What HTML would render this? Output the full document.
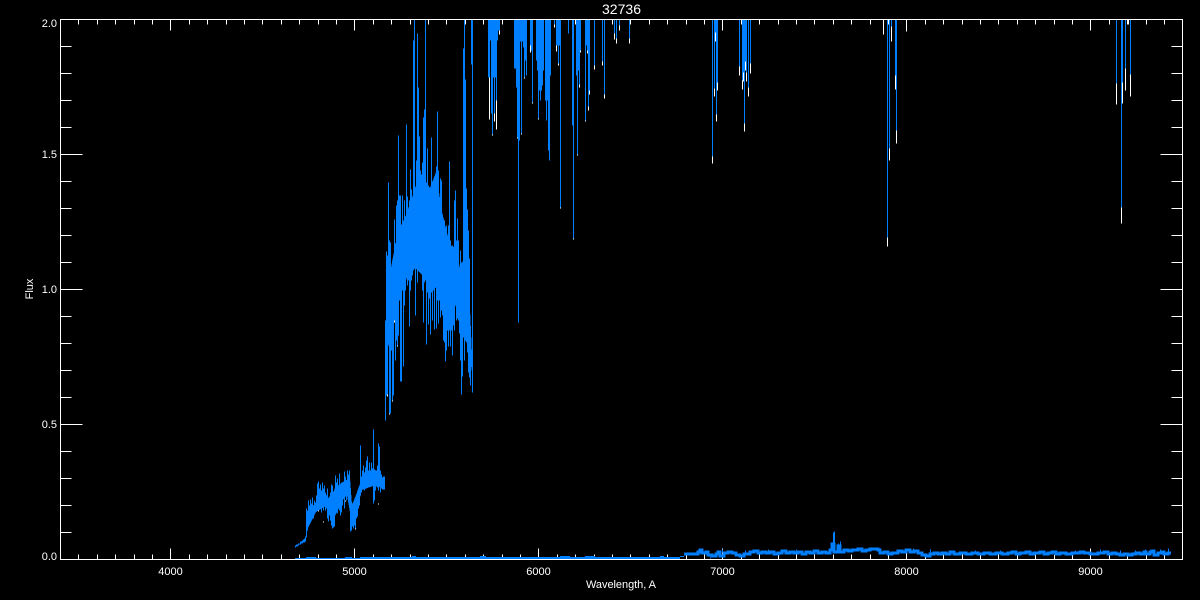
<!DOCTYPE html>
<html><head><meta charset="utf-8"><title>32736</title>
<style>html,body{margin:0;padding:0;background:#000;width:1200px;height:600px;overflow:hidden}svg{display:block}text{font-family:"Liberation Sans",sans-serif;font-size:11px;fill:#fff}</style></head>
<body>
<svg width="1200" height="600" viewBox="0 0 1200 600">
<rect width="1200" height="600" fill="#000"/>
<g shape-rendering="crispEdges" fill="none" stroke-width="1">
<!-- ticks -->
<path stroke="#fff" transform="translate(.5 .5)" d="M78 19V24M97 19V24M115 19V24M134 19V24M152 19V24M170 19V30M189 19V24M207 19V24M226 19V24M244 19V24M262 19V24M281 19V24M299 19V24M318 19V24M336 19V24M354 19V30M373 19V24M391 19V24M410 19V24M428 19V24M446 19V24M465 19V24M483 19V24M502 19V24M520 19V24M538 19V30M557 19V24M575 19V24M594 19V24M612 19V24M630 19V24M649 19V24M667 19V24M686 19V24M704 19V24M722 19V30M741 19V24M759 19V24M778 19V24M796 19V24M814 19V24M833 19V24M851 19V24M870 19V24M888 19V24M906 19V30M925 19V24M943 19V24M962 19V24M980 19V24M998 19V24M1017 19V24M1035 19V24M1054 19V24M1072 19V24M1090 19V30M1109 19V24M1127 19V24M1146 19V24M1164 19V24
M78 559V554M97 559V554M115 559V554M134 559V554M152 559V554M170 559V548M189 559V554M207 559V554M226 559V554M244 559V554M262 559V554M281 559V554M299 559V554M318 559V554M336 559V554M354 559V548M373 559V554M391 559V554M410 559V554M428 559V554M446 559V554M465 559V554M483 559V554M502 559V554M520 559V554M538 559V548M557 559V554M575 559V554M594 559V554M612 559V554M630 559V554M649 559V554M667 559V554M686 559V554M704 559V554M722 559V548M741 559V554M759 559V554M778 559V554M796 559V554M814 559V554M833 559V554M851 559V554M870 559V554M888 559V554M906 559V548M925 559V554M943 559V554M962 559V554M980 559V554M998 559V554M1017 559V554M1035 559V554M1054 559V554M1072 559V554M1090 559V548M1109 559V554M1127 559V554M1146 559V554M1164 559V554
M60 46H71M60 73H71M60 100H71M60 127H71M60 154H82M60 181H71M60 208H71M60 235H71M60 262H71M60 289H82M60 316H71M60 343H71M60 370H71M60 397H71M60 424H82M60 451H71M60 478H71M60 505H71M60 532H71
M1182 46H1171M1182 73H1171M1182 100H1171M1182 127H1171M1182 154H1160M1182 181H1171M1182 208H1171M1182 235H1171M1182 262H1171M1182 289H1160M1182 316H1171M1182 343H1171M1182 370H1171M1182 397H1171M1182 424H1160M1182 451H1171M1182 478H1171M1182 505H1171M1182 532H1171"/>
<!-- white spectrum residuals -->
<path stroke="#fff" transform="translate(.5 .5)" d="M489 77V119M492 113V135M494 113V121M496 100V129M499 30V34M517 100V138M521 120V134M524 60V78M530 45V52M532 60V103M538 100V119M546 100V120M548 120V122M554 19V27M556 45V51M558 45V65M560 45V208M573 125V239M577 75V155M579 70V87M580 45V52M585 100V121M587 45V53M588 100V110M589 85V94M594 60V69M602 55V65M604 90V98M614 32V39M616 37V43M619 22V30M629 35V43M712 156V163M714 82V96M715 32V41M716 112V121M717 82V90M739 66V75M742 80V89M743 72V81M744 123V131M745 61V70M746 72V81M748 87V96M750 63V73M883 19V34M887 237V246M889 148V160M891 26V41M895 75V89M896 130V143M906 19V31M1116 83V104M1122 82V103M1121 207V223M1125 68V90M1127 19V24M1128 19V24M1130 74V96M387 394V396M389 413V414M392 400V401M397 345V346M394 320V322M388 305V306M414 265V267M416 255V256M442 240V249M464 280V288M306 515V516M318 510V511M323 521V522M345 500V501M355 528V529M366 485V487M373 490V491M378 503V504"/>
<!-- solid underlay of the noisy flux body -->
<polygon fill="#0080ff" points="386,300 392,262 398,232 406,215 413,195 420,172 430,188 436,172 442,212 450,245 456,248 460,268 464,258 468,262 472,355 472,372 468,345 462,335 456,305 450,318 444,312 436,288 425,278 415,268 408,275 402,290 396,305 390,340 386,355"/>
<polygon fill="#0080ff" points="306,512 316,503 323,490 330,500 335,488 343,482 350,478 352,505 356,495 362,478 373,468 385,480 385,488 373,486 362,490 356,512 352,524 347,495 343,500 333,520 326,506 316,512 306,532"/>
<!-- blue flux -->
<path stroke="#0080ff" transform="translate(.5 .5)" d="
M295 545V547M296 544V546M297 544V546M298 543V545M299 543V544M300 541V544M301 541V543M302 540V543M303 539V542M304 538V542M305 536V541M306 508V537M307 512V530
M308 500V515M309 505V516M310 499V512M311 503V512M312 497V510M313 505V518M314 500V511M315 502V512M316 495V510
M317 483V500M318 481V510M319 488V502M320 484V505M321 490V512M322 482V505M323 488V510M324 485V498M325 492V510M326 495V508
M327 488V518M328 503V521M329 496V515M330 492V520M331 484V525M332 485V528M333 496V527M334 502V526M335 475V510M336 482V500M337 478V513M338 490V505M339 473V510M340 495V515M341 482V512M342 490V505M343 483V498M344 471V508M345 476V494M346 482V500M347 470V495M348 474V492M349 470V500M350 500V531M351 505V530M352 503V526M353 510V528M354 505V525M355 500V528M356 498V518M357 492V516M358 490V508M359 486V505M360 445V495M361 476V492M362 470V485M363 465V482M364 472V490M365 467V486M366 460V487M367 456V480M368 470V483M369 462V482M370 470V486M371 462V478M372 470V485M373 429V503M374 470V500M375 478V490M376 470V485M377 465V487M378 443V490M379 446V480M380 470V492M381 474V488M382 478V489M383 476V489M384 476V489M385 320V420
M386 251V395M387 255V394M388 182V305M389 240V413M390 242V413M391 268V350M392 270V400M393 275V395M394 219V320M395 243V360M396 205V340M397 200V345M398 135V335M399 195V300M400 195V381M401 240V381M402 195V290M403 230V366M404 200V305M405 240V290M406 124V270M407 196V285M408 215V280M409 200V326M410 169V290M411 189V280M412 205V275M413 40V270M414 19V265M415 187V315M416 160V262M417 33V282M418 87V260M419 136V262M420 170V265M421 175V262M422 162V290M423 117V322M424 109V282M425 19V280M426 184V344M427 148V292M428 190V324M429 195V298M430 197V334M431 137V292M432 181V320M433 207V290M434 210V329M435 200V278M436 166V328M437 111V300M438 170V323M439 205V300M440 178V317M441 180V310M442 215V315M443 225V340M444 220V342M445 228V361M446 225V350M447 235V330M448 225V346M449 161V330M450 240V346M451 265V330M452 245V355M453 270V325M454 200V330M455 190V305M456 240V320M457 218V318M458 240V320M459 270V333M460 250V360M461 262V394M462 268V376M463 48V300M464 19V360M465 79V270M466 188V270M467 209V352M468 230V372M469 258V377M470 350V385M471 19V64M472 19V392
M488 19V77M489 19V77M490 19V40M491 19V113M492 19V134M493 19V77M494 19V113M495 19V77M496 19V100M497 19V40M498 19V30M499 19V30
M514 19V68M515 19V68M516 19V87M517 19V137M518 19V322M519 19V140M520 19V41M521 19V133M522 19V41M523 19V47M524 19V77M525 19V60M526 19V75M530 19V45M531 19V50M532 19V102
M536 19V60M537 19V70M538 19V118M539 19V90M540 19V100M541 19V90M542 19V85M543 19V70M545 19V100M546 19V120M547 19V100M548 19V150M549 19V160M550 19V75
M554 19V24M556 19V45M557 19V45M558 19V63M559 19V45M560 19V207M568 19V33M572 19V125M573 19V238M576 19V75M577 19V154M578 19V70M579 19V84M580 19V50M585 19V120M586 19V45M587 19V50M588 19V106M589 19V90M594 19V65M602 19V61M604 19V94M614 19V33M616 19V38M619 19V25M629 19V38
M712 19V156M714 19V88M715 19V32M716 19V114M717 19V82M739 19V66M742 19V80M743 19V72M744 19V123M745 19V61M746 19V72M748 19V87M750 19V63M889 19V148M891 19V26M895 19V75M896 19V130M1116 19V83M1121 19V207M1122 19V82M1125 19V68M1130 19V74
M887 19V237"/>
<!-- low baseline -->
<path stroke="#0080ff" d="M295 558.5H680M306 557.5H316M345 557.5H352M360 557.5H680M412 556.5H416M480 556.5H486M560 556.5H570M585 556.5H595M660 556.5H664M680 556.5H684"/>
<path stroke="#0080ff" stroke-width="3" d="M684 554H698V552H700V550H702V553H706V552H708V555H712V556H716V554H718V552H720V556H724V553H728V552H732V553H736V555H740V556H744V554H750V552H754V551H758V553H762V552H766V553H770V552H774V554H778V553H782V551H786V553H790V552H794V553H798V552H802V554H806V552H810V553H814V551H818V553H822V552H826V553H830V550H832V544H834V552H838V546H840V552H844V550H848V551H852V550H858V549H862V551H866V550H870V549H878V550H880V553H884V552H888V554H892V553H898V551H902V552H906V550H910V552H914V551H918V553H922V555H926V556H930V554H934V553H938V554H942V553H946V554H950V552H954V554H960V553H966V554H972V553H978V554H984V553H990V554H996V553H1002V554H1008V553H1012V552H1016V554H1020V553H1026V552H1030V554H1034V553H1040V552H1044V554H1048V553H1052V552H1056V554H1060V553H1066V554H1072V553H1080V552H1084V553H1090V554H1098V553H1104V552H1108V554H1112V553H1116V554H1120V555H1124V554H1128V555H1132V554H1136V553H1140V554H1144V552H1146V554H1150V552H1152V551H1154V555H1158V553H1162V552H1164V554H1168V553H1171"/>
<path stroke="#0080ff" transform="translate(.5 .5)" d="M833 532V550M834 531V548M840 541V552M838 543V552M700 548V552M1145 549V553M1151 549V553M1153 550V553M1168 548V553M1050 551V553M1040 550V553M1010 551V553M913 548V552M861 547V552M796 549V553M710 557V558M722 549V552M745 550V553M768 549V552M786 549V552M930 549V552M975 550V553M1000 550V553M1030 550V553M1075 550V553M1100 549V552M1120 550V553M1135 550V553M1160 549V552"/>
<!-- frame -->
<path stroke="#fff" transform="translate(.5 .5)" d="M60 19H1182V559H60ZM60 19V559"/>
</g>
<text x="621.5" y="14" text-anchor="middle" style="font-size:14px" textLength="39">32736</text>
<text x="621" y="588" text-anchor="middle" textLength="70">Wavelength, A</text>
<text transform="translate(33 289) rotate(-90)" text-anchor="middle">Flux</text>
<text x="170.5" y="575" text-anchor="middle">4000</text>
<text x="354.5" y="575" text-anchor="middle">5000</text>
<text x="538.5" y="575" text-anchor="middle">6000</text>
<text x="722.5" y="575" text-anchor="middle">7000</text>
<text x="906.5" y="575" text-anchor="middle">8000</text>
<text x="1090.5" y="575" text-anchor="middle">9000</text>
<text x="57" y="27" text-anchor="end">2.0</text>
<text x="57" y="158" text-anchor="end">1.5</text>
<text x="57" y="293" text-anchor="end">1.0</text>
<text x="57" y="428" text-anchor="end">0.5</text>
<text x="57" y="560" text-anchor="end">0.0</text>
</svg>
</body></html>
